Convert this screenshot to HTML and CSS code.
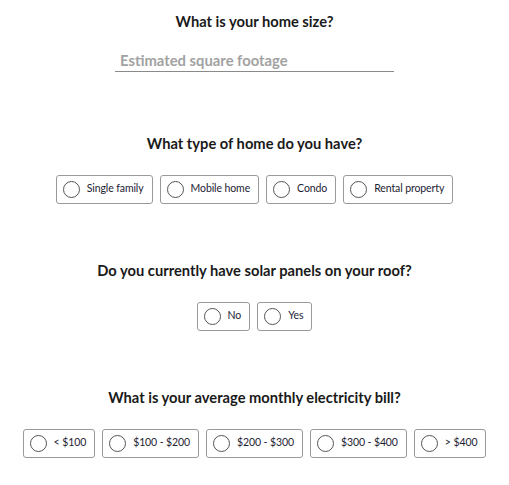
FILE: index.html
```html
<!DOCTYPE html>
<html>
<head>
<meta charset="utf-8">
<link rel="stylesheet" href="styles.css">
</head>
<body>
<div class="form">
  <section class="q q-first">
    <h2 class="title">What is your home size?</h2>
    <div class="field"><span class="placeholder">Estimated square footage</span></div>
  </section>
  <section class="q">
    <h2 class="title">What type of home do you have?</h2>
    <div class="options">
      <label class="opt"><span class="radio"></span><span class="lbl">Single family</span></label>
      <label class="opt"><span class="radio"></span><span class="lbl">Mobile home</span></label>
      <label class="opt"><span class="radio"></span><span class="lbl">Condo</span></label>
      <label class="opt"><span class="radio"></span><span class="lbl">Rental property</span></label>
    </div>
  </section>
  <section class="q">
    <h2 class="title">Do you currently have solar panels on your roof?</h2>
    <div class="options">
      <label class="opt"><span class="radio"></span><span class="lbl">No</span></label>
      <label class="opt"><span class="radio"></span><span class="lbl">Yes</span></label>
    </div>
  </section>
  <section class="q">
    <h2 class="title">What is your average monthly electricity bill?</h2>
    <div class="options">
      <label class="opt"><span class="radio"></span><span class="lbl">&lt; $100</span></label>
      <label class="opt"><span class="radio"></span><span class="lbl">$100 - $200</span></label>
      <label class="opt"><span class="radio"></span><span class="lbl">$200 - $300</span></label>
      <label class="opt"><span class="radio"></span><span class="lbl">$300 - $400</span></label>
      <label class="opt"><span class="radio"></span><span class="lbl">&gt; $400</span></label>
    </div>
  </section>
</div>
</body>
</html>
```
FILE: styles.css
```css
html, body {
  margin: 0;
  padding: 0;
  background: #ffffff;
}
body {
  font-family: Lato, "Open Sans", Arial, sans-serif;
  color: #1c1c1c;
}
.form {
  display: flex;
  flex-direction: column;
  align-items: center;
  padding-top: 12px;
}
.q {
  display: flex;
  flex-direction: column;
  align-items: center;
  margin-top: 57px;
}
.q-first {
  margin-top: 0;
}
.title {
  margin: 0;
  font-size: 14.7px;
  line-height: 18px;
  font-weight: 700;
  color: #1a1a1a;
}
.field {
  margin-top: 18px;
  width: 274px;
  height: 23px;
  padding-left: 5px;
  border-bottom: 1px solid #8a8a8a;
  display: flex;
  align-items: center;
}
.placeholder {
  font-size: 14.8px;
  font-weight: 700;
  color: #a2a2a2;
}
.q-first + .q {
  margin-top: 62px;
}
.options {
  margin-top: 23px;
  display: flex;
  gap: 7px;
}
.opt {
  display: flex;
  align-items: center;
  height: 29px;
  box-sizing: border-box;
  padding: 0 8px 0 6px;
  border: 1px solid #9a9a9a;
  border-radius: 3px;
  background: #fff;
}
.radio {
  width: 17px;
  height: 17px;
  box-sizing: border-box;
  border: 1px solid #555;
  border-radius: 50%;
  margin-right: 7px;
  flex: none;
}
.lbl {
  font-size: 10.5px;
  letter-spacing: -0.1px;
  color: #1d2233;
  margin-bottom: 3px;
}
```
